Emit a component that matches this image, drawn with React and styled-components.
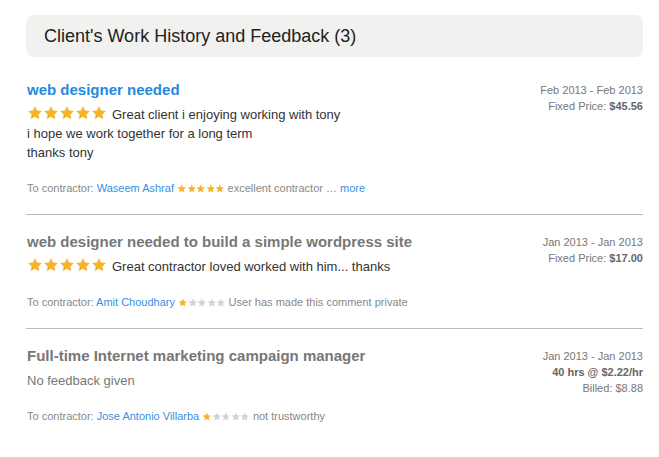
import React from 'react';
import styled, { createGlobalStyle } from 'styled-components';

const GlobalStyle = createGlobalStyle`
  body {
    margin: 0;
    background: #fff;
    font-family: 'Liberation Sans', Arial, sans-serif;
  }
`;

const Page = styled.div`
  padding: 15px 16px 0 26px;
`;

const Header = styled.div`
  background: #f1f1ef;
  border-radius: 8px;
  height: 42px;
  display: flex;
  align-items: center;
  padding-left: 18px;
  margin-bottom: 6px;
`;

const HeaderTitle = styled.h2`
  margin: 0;
  font-size: 18px;
  font-weight: normal;
  color: #222;
`;

const Item = styled.div`
  display: flex;
  justify-content: space-between;
  padding: 18px 0 19px 1px;
  border-bottom: ${(p) => (p.$last ? 'none' : '1px solid #bbb')};
`;

const Main = styled.div`
  display: flex;
  flex-direction: column;
`;

const Title = styled.a`
  font-size: 15px;
  font-weight: bold;
  line-height: 18px;
  color: ${(p) => (p.$active ? '#2289e6' : '#777')};
  text-decoration: none;
`;

const Feedback = styled.div`
  margin-top: 6px;
  font-size: 13px;
  line-height: 19px;
  color: ${(p) => (p.$muted ? '#777' : '#333')};
`;

const Contractor = styled.div`
  margin-top: 19px;
  font-size: 11px;
  line-height: 14px;
  color: #888;
  white-space: nowrap;
`;

const Link = styled.a`
  color: #3a8ee2;
  text-decoration: none;
`;

const Meta = styled.div`
  text-align: right;
  font-size: 11px;
  line-height: 16px;
  color: #777;
  margin-top: 1px;
`;

const Strong = styled.b`
  color: #666;
`;

const StarRow = styled.span`
  display: inline-flex;
  vertical-align: ${(p) => (p.$size > 12 ? '-2px' : '-1px')};
  margin-right: ${(p) => (p.$size > 12 ? '5px' : '0')};
`;

const Star = ({ size, filled }) => (
  <svg width={size} height={size} viewBox="0 0 24 24">
    <polygon
      points="12,1.5 15.1,8.3 22.5,9.1 17,14.1 18.5,21.5 12,17.8 5.5,21.5 7,14.1 1.5,9.1 8.9,8.3"
      fill={filled ? '#f7b428' : '#d2d2d2'}
    />
  </svg>
);

const Stars = ({ count, size }) => (
  <StarRow $size={size}>
    {[0, 1, 2, 3, 4].map((i) => (
      <Star key={i} size={size} filled={i < count} />
    ))}
  </StarRow>
);

const jobs = [
  {
    title: 'web designer needed',
    active: true,
    rating: 5,
    lines: ['Great client i enjoying working with tony', 'i hope we work together for a long term', 'thanks tony'],
    contractor: 'Waseem Ashraf',
    cRating: 5,
    comment: 'excellent contractor …',
    more: true,
    meta: [['Feb 2013 - Feb 2013'], ['Fixed Price: ', '$45.56']],
  },
  {
    title: 'web designer needed to build a simple wordpress site',
    rating: 5,
    lines: ['Great contractor loved worked with him... thanks'],
    contractor: 'Amit Choudhary',
    cRating: 1,
    comment: 'User has made this comment private',
    meta: [['Jan 2013 - Jan 2013'], ['Fixed Price: ', '$17.00']],
  },
  {
    title: 'Full-time Internet marketing campaign manager',
    rating: 0,
    lines: ['No feedback given'],
    contractor: 'Jose Antonio Villarba',
    cRating: 1,
    comment: 'not trustworthy',
    meta: [['Jan 2013 - Jan 2013'], ['', '40 hrs @ $2.22/hr'], ['Billed: $8.88']],
  },
];

export default function App() {
  return (
    <Page>
      <GlobalStyle />
      <Header>
        <HeaderTitle>Client's Work History and Feedback (3)</HeaderTitle>
      </Header>
      {jobs.map((job, idx) => (
        <Item key={job.title} $last={idx === jobs.length - 1}>
          <Main>
            <Title href="#" $active={job.active}>{job.title}</Title>
            <Feedback $muted={!job.rating}>
              {job.lines.map((line, i) => (
                <div key={i}>
                  {i === 0 && job.rating > 0 && <Stars count={job.rating} size={16} />}
                  {line}
                </div>
              ))}
            </Feedback>
            <Contractor>
              To contractor: <Link href="#">{job.contractor}</Link>{' '}
              <Stars count={job.cRating} size={9.5} /> {job.comment}
              {job.more && <> <Link href="#">more</Link></>}
            </Contractor>
          </Main>
          <Meta>
            {job.meta.map(([label, value], i) => (
              <div key={i}>
                {label}
                {value && <Strong>{value}</Strong>}
              </div>
            ))}
          </Meta>
        </Item>
      ))}
    </Page>
  );
}
